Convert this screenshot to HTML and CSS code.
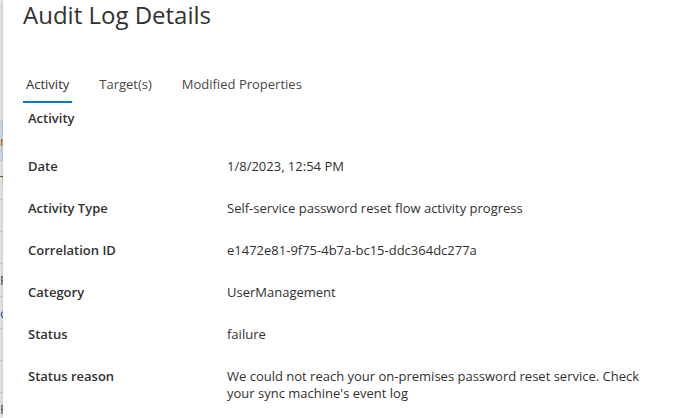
FILE: index.html
```html
<!DOCTYPE html>
<html lang="en">
<head>
    <meta charset="UTF-8">
    <meta name="viewport" content="width=device-width, initial-scale=1.0">
    <title>Audit Log Details</title>
    <link rel="stylesheet" href="styles.css">
</head>
<body>
    <div class="screen">
        <!-- list page peeking out behind the blade -->
        <div class="behind">
            <div class="behind-row" style="height: 121px"></div>
            <div class="behind-row selected" style="height: 40px"><span class="orange">r</span></div>
            <div class="behind-row" style="height: 39px"><span>T</span></div>
            <div class="behind-row" style="height: 32px"></div>
            <div class="behind-row" style="height: 32px"></div>
            <div class="behind-row" style="height: 33px"><span>F</span></div>
            <div class="behind-row" style="height: 32px"><span class="blue">c</span></div>
            <div class="behind-row" style="height: 32px"></div>
            <div class="behind-row" style="height: 32px"></div>
            <div class="behind-row" style="height: 32px"><span>F</span></div>
        </div>

        <div class="panel">
            <h1 class="title">Audit Log Details</h1>

            <div class="tabs">
                <button class="tab active">Activity</button>
                <button class="tab">Target(s)</button>
                <button class="tab">Modified Properties</button>
            </div>

            <div class="section">
                <h2 class="section-title">Activity</h2>
                <div class="details">
                    <div class="detail-row">
                        <div class="label">Date</div>
                        <div class="value">1/8/2023, 12:54 PM</div>
                    </div>
                    <div class="detail-row">
                        <div class="label">Activity Type</div>
                        <div class="value">Self-service password reset flow activity progress</div>
                    </div>
                    <div class="detail-row">
                        <div class="label">Correlation ID</div>
                        <div class="value">e1472e81-9f75-4b7a-bc15-ddc364dc277a</div>
                    </div>
                    <div class="detail-row">
                        <div class="label">Category</div>
                        <div class="value">UserManagement</div>
                    </div>
                    <div class="detail-row">
                        <div class="label">Status</div>
                        <div class="value">failure</div>
                    </div>
                    <div class="detail-row">
                        <div class="label">Status reason</div>
                        <div class="value">We could not reach your on-premises password reset service. Check your sync machine's event log</div>
                    </div>
                </div>
            </div>
        </div>
    </div>
</body>
</html>
```

FILE: styles.css
```css
body {
    margin: 0;
    padding: 0;
    background-color: #ffffff;
    font-family: "Open Sans", "Noto Sans", sans-serif;
    color: #323130;
    overflow: hidden;
}

.screen {
    display: flex;
    height: 418px;
}

.behind {
    width: 3px;
    flex-shrink: 0;
    overflow: hidden;
    background-color: #f3f3f3;
    font-size: 13px;
}

.behind-row {
    box-sizing: border-box;
    border-bottom: 1px solid #d6d6d6;
    display: flex;
    align-items: center;
    white-space: nowrap;
    color: #555555;
}

.behind-row.selected {
    background-color: #d5e6f3;
}

.behind-row .orange {
    color: #c26a14;
}

.behind-row .blue {
    color: #2a5ac8;
}

.panel {
    flex: 1;
    background-color: #ffffff;
    padding: 0 20px;
    box-shadow: -2px 0 4px rgba(0, 0, 0, 0.18);
    position: relative;
}

.title {
    margin: 0;
    font-size: 24px;
    font-weight: 400;
    line-height: 30px;
    color: #323130;
}

.tabs {
    display: flex;
    gap: 24px;
    margin-top: 45px;
}

.tab {
    background: none;
    border: none;
    border-bottom: 2px solid transparent;
    padding: 0 3px 8px;
    font-family: inherit;
    font-size: 13px;
    line-height: 18px;
    color: #4a4846;
    cursor: pointer;
}

.tab.active {
    color: #323130;
    border-bottom-color: #0078d4;
}

.section {
    padding-left: 5px;
}

.section-title {
    margin: 6px 0 19px;
    font-size: 13px;
    font-weight: 600;
    line-height: 18px;
}

.detail-row {
    display: grid;
    grid-template-columns: 199px 420px;
    padding: 12px 0 13px;
    font-size: 13px;
    line-height: 17px;
}

.label {
    font-weight: 600;
}
```
